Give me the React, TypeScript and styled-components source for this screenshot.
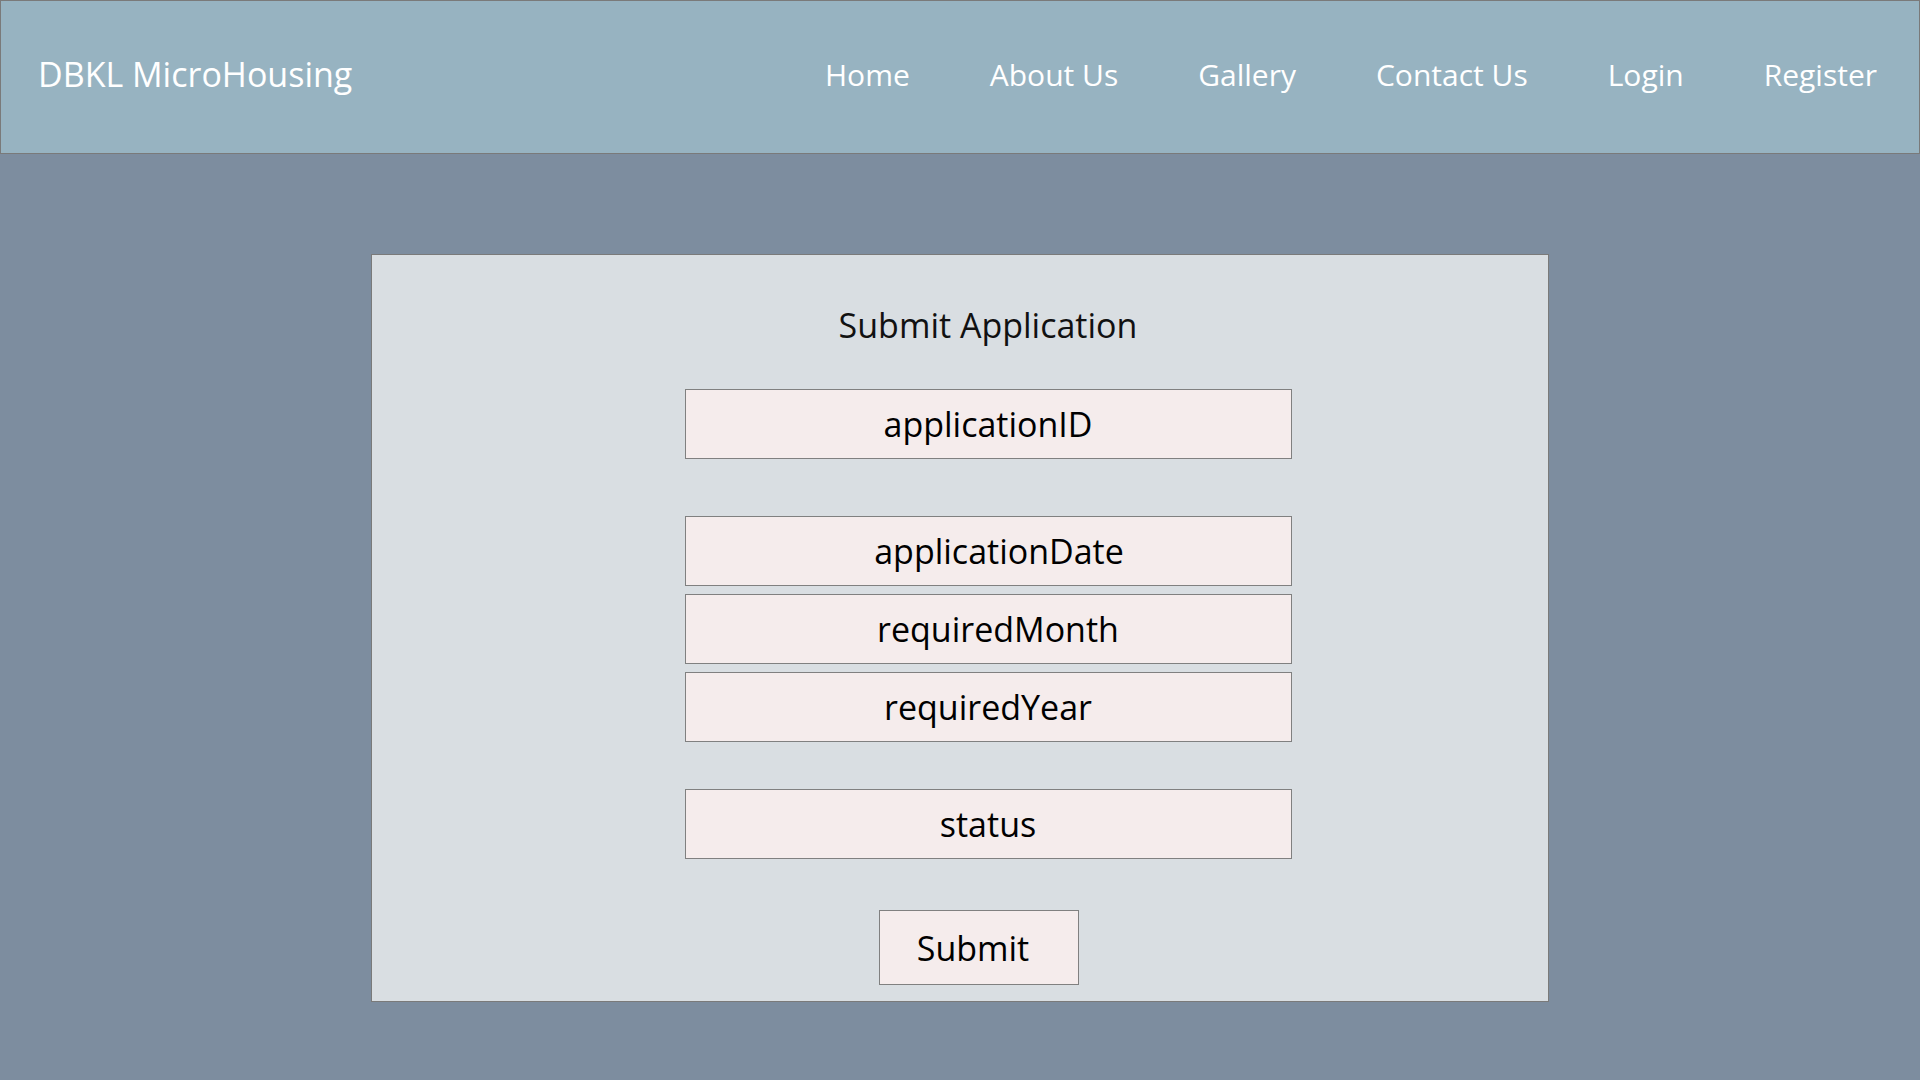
import React from "react";
import styled, { createGlobalStyle } from "styled-components";

const GlobalStyle = createGlobalStyle`
  html, body {
    margin: 0;
    padding: 0;
    height: 100%;
  }
  body {
    background: #7d8d9f;
    font-family: "Open Sans", "Noto Sans", sans-serif;
  }
  #root {
    min-height: 100vh;
  }
`;

const Header = styled.header`
  display: flex;
  align-items: center;
  justify-content: space-between;
  height: 154px;
  box-sizing: border-box;
  background: #97b3c1;
  border: 1px solid #7a7a7a;
  padding: 0 42px 6px 37px;
`;

const Brand = styled.div`
  color: #ffffff;
  font-size: 34px;
  white-space: nowrap;
`;

const Nav = styled.nav`
  display: flex;
  align-items: center;
  gap: 80px;
`;

const NavLink = styled.a`
  color: #ffffff;
  font-size: 30px;
  text-decoration: none;
  white-space: nowrap;
  cursor: pointer;
`;

const Main = styled.main`
  display: flex;
  justify-content: center;
  padding-top: 100px;
`;

const Card = styled.section`
  width: 1178px;
  height: 748px;
  box-sizing: border-box;
  background: #d9dee2;
  border: 1px solid #7a7a7a;
  display: flex;
  flex-direction: column;
  align-items: center;
  padding: 50px 0 0 56px;
`;

const Title = styled.h2`
  margin: 0;
  font-size: 34px;
  font-weight: 400;
  line-height: 40px;
  color: #111;
`;

const Form = styled.form`
  display: flex;
  flex-direction: column;
  align-items: center;
  margin-top: 44px;
`;

const Field = styled.input<{ $gap?: number; $shift?: number }>`
  width: 607px;
  height: 70px;
  box-sizing: border-box;
  margin: ${(p) => p.$gap ?? 0}px 0 0 0;
  padding: 0 0 0 ${(p) => p.$shift ?? 0}px;
  background: #f5ecec;
  border: 1px solid #808080;
  font-family: "Open Sans", "Noto Sans", sans-serif;
  font-size: 34px;
  text-align: center;
  color: #000;
  outline: none;

  &::placeholder {
    color: #000;
    opacity: 1;
  }
`;

const SubmitButton = styled.button`
  width: 200px;
  height: 75px;
  box-sizing: border-box;
  margin: 51px 18px 0 0;
  padding: 0 12px 0 0;
  background: #f5ecec;
  border: 1px solid #808080;
  font-family: "Open Sans", "Noto Sans", sans-serif;
  font-size: 34px;
  color: #000;
  cursor: pointer;
`;

const links = ["Home", "About Us", "Gallery", "Contact Us", "Login", "Register"];

const fields = [
  { name: "applicationID", gap: 0, shift: 0 },
  { name: "applicationDate", gap: 57, shift: 22 },
  { name: "requiredMonth", gap: 8, shift: 20 },
  { name: "requiredYear", gap: 8, shift: -8 },
  { name: "status", gap: 47, shift: 0 },
];

export default function App() {
  return (
    <>
      <GlobalStyle />
      <Header>
        <Brand>DBKL MicroHousing</Brand>
        <Nav>
          {links.map((l) => (
            <NavLink key={l}>{l}</NavLink>
          ))}
        </Nav>
      </Header>
      <Main>
        <Card>
          <Title>Submit Application</Title>
          <Form onSubmit={(e) => e.preventDefault()}>
            {fields.map((f) => (
              <Field
                key={f.name}
                name={f.name}
                placeholder={f.name}
                $gap={f.gap}
                $shift={f.shift}
              />
            ))}
            <SubmitButton type="submit">Submit</SubmitButton>
          </Form>
        </Card>
      </Main>
    </>
  );
}
